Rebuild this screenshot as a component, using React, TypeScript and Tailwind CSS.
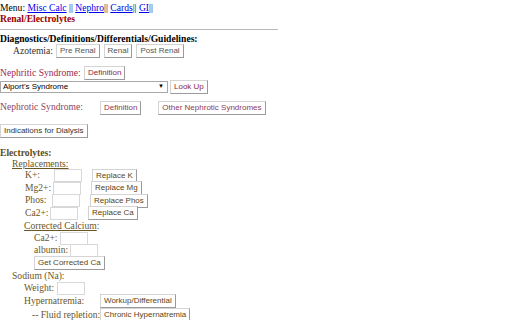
import React from "react";

const serif = "font-['Liberation_Serif',serif]";
const btnBase =
  "font-['Liberation_Sans',Arial,sans-serif] text-[8px] leading-none bg-white border border-[#d4d4d4] border-r-[#9a9a9a] border-b-[#9a9a9a] px-[3px] h-[14px] flex items-center whitespace-nowrap shrink-0";

function Btn({ label, color, className = "" }: { label: string; color: string; className?: string }) {
  return (
    <button className={`${btnBase} ${color} ${className}`} type="button">
      {label}
    </button>
  );
}

function Field({ className = "" }: { className?: string }) {
  return <input className={`w-[28px] h-[13px] shrink-0 border border-[#d8d8d8] bg-white ${className}`} />;
}

function Lbl({ w, children, className = "" }: { w: string; children: React.ReactNode; className?: string }) {
  return <span className={`${w} shrink-0 whitespace-nowrap ${className}`}>{children}</span>;
}

export default function App() {
  const brown = "text-[#5f4b12]";
  const lbl = "text-[#6b5626]";
  const ebtn = "text-[#5a4516]";

  return (
    <div className={`${serif} text-[9.6px] text-black bg-white w-[512px] h-[320px] overflow-hidden pt-[2px]`}>
      <div className="leading-[11px] whitespace-nowrap">
        Menu: <a className="text-[#0000ee] underline">Misc Calc</a> || <a className="text-[#0000ee] underline">Nephro</a>||{" "}
        <a className="text-[#0000ee] underline">Cards</a>|| <a className="text-[#0000ee] underline">GI</a>||
      </div>
      <div className="leading-[11px] font-bold text-[#990000]">Renal/Electrolytes</div>
      <div className="mt-[5px] w-[278px] border-t border-[#b8b8b8]" />

      <div className="mt-[3px] leading-[11px] font-bold whitespace-nowrap">Diagnostics/Definitions/Differentials/Guidelines:</div>
      <div className="flex items-center h-[14px] pl-[13px] text-[#333]">
        <Lbl w="w-[43px]">Azotemia:</Lbl>
        <div className="flex gap-[4px]">
          <Btn label="Pre Renal" color="text-[#555]" />
          <Btn label="Renal" color="text-[#555]" />
          <Btn label="Post Renal" color="text-[#555]" />
        </div>
      </div>

      <div className="mt-[8px] flex items-center h-[14px]">
        <Lbl w="w-[84px]" className="text-[#a0284a]">Nephritic Syndrome:</Lbl>
        <Btn label="Definition" color="text-[#8e2a44]" />
      </div>
      <div className="flex items-center h-[13px]">
        <div className="w-[168px] h-[12px] shrink-0 border border-[#a8a8a8] bg-white flex items-center justify-between px-[2px] font-['Liberation_Sans',Arial,sans-serif] text-[8px] text-black">
          <span>Alport's Syndrome</span>
          <span className="text-[6px] mr-[1px]">▼</span>
        </div>
        <Btn label="Look Up" color="text-[#8e2a44]" className="ml-[2px]" />
      </div>

      <div className="mt-[7px] flex items-center h-[15px]">
        <Lbl w="w-[100px]" className="text-[#8e4560]">Nephrotic Syndrome:</Lbl>
        <Btn label="Definition" color="text-[#8e3a58]" />
        <Btn label="Other Nephrotic Syndromes" color="text-[#8e3a58]" className="ml-[17px]" />
      </div>

      <div className="mt-[9px] flex">
        <Btn label="Indications for Dialysis" color="text-[#333]" />
      </div>

      <div className={`mt-[9px] leading-[11px] font-bold ${brown}`}>Electrolytes:</div>
      <div className={`leading-[11px] pl-[12px] ${lbl}`}>
        <span className="underline">Replacements:</span>
      </div>

      <div className={`${lbl}`}>
        <div className="flex items-center h-[13px] pl-[25px]">
          <Lbl w="w-[29px]">K+:</Lbl>
          <Field />
          <Btn label="Replace K" color={ebtn} className="ml-[10px] h-[13px]" />
        </div>
        <div className="flex items-center h-[12px] pl-[25px]">
          <Lbl w="w-[28px]">Mg2+:</Lbl>
          <Field />
          <Btn label="Replace Mg" color={ebtn} className="ml-[10px] h-[13px]" />
        </div>
        <div className="flex items-center h-[13px] pl-[25px]">
          <Lbl w="w-[27px]">Phos:</Lbl>
          <Field />
          <Btn label="Replace Phos" color={ebtn} className="ml-[10px] h-[13px]" />
        </div>
        <div className="flex items-center h-[12px] pl-[25px]">
          <Lbl w="w-[25px]">Ca2+:</Lbl>
          <Field />
          <Btn label="Replace Ca" color={ebtn} className="ml-[10px] h-[13px]" />
        </div>

        <div className="leading-[12px] pl-[24px] mt-[1px]">
          <span className="underline">Corrected Calcium</span>:
        </div>
        <div className="flex items-center h-[12px] pl-[34px]">
          <Lbl w="w-[26px]">Ca2+:</Lbl>
          <Field />
        </div>
        <div className="flex items-center h-[12px] pl-[34px]">
          <Lbl w="w-[36px]">albumin:</Lbl>
          <Field />
        </div>
        <div className="flex items-center h-[14px] pl-[34px]">
          <Btn label="Get Corrected Ca" color={ebtn} className="h-[13px]" />
        </div>

        <div className="leading-[12px] pl-[12px]">Sodium (Na):</div>
        <div className="flex items-center h-[12px] pl-[24px]">
          <Lbl w="w-[33px]">Weight:</Lbl>
          <Field />
        </div>
        <div className="flex items-center h-[14px] pl-[24px]">
          <Lbl w="w-[76px]">Hypernatremia:</Lbl>
          <Btn label="Workup/Differential" color={ebtn} className="h-[13px]" />
        </div>
        <div className="flex items-center h-[14px] pl-[32px]">
          <Lbl w="w-[68px]">-- Fluid repletion:</Lbl>
          <Btn label="Chronic Hypernatremia" color={ebtn} className="h-[13px]" />
        </div>
        <div className="pl-[100px]">
          <Field />
        </div>
      </div>
    </div>
  );
}
